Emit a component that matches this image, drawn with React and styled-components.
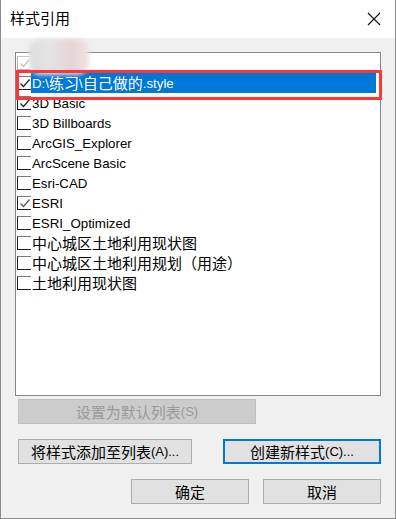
import React from "react";
import styled, { createGlobalStyle } from "styled-components";

const Global = createGlobalStyle`
  html, body { margin: 0; padding: 0; background: #fff; }
  body { font-family: "Liberation Sans", "Noto Sans CJK SC", sans-serif; }
  * { box-sizing: border-box; }
`;

const Window = styled.div`
  width: 396px;
  height: 519px;
  border: 1px solid #8c8c8c;
  border-top: none;
  background: #f0f0f0;
  display: flex;
  flex-direction: column;
  position: relative;
`;

const TitleBar = styled.div`
  height: 38px;
  background: #fff;
  display: flex;
  align-items: center;
  justify-content: space-between;
  padding: 0 0 0 9px;
`;

const Title = styled.div`
  font-family: "Noto Sans CJK SC", sans-serif;
  font-size: 15px;
  color: #000;
  line-height: 20px;
  margin-top: -2px;
`;

const Close = styled.div`
  width: 44px;
  height: 38px;
  display: flex;
  align-items: center;
  justify-content: center;
  margin-right: -1px;
`;

const Body = styled.div`
  flex: 1;
  padding: 14px 14px 0 14px;
  display: flex;
  flex-direction: column;
`;

const ListBox = styled.div`
  height: 344px;
  background: #fff;
  border: 1px solid #828790;
  position: relative;
  padding-right: 4px;
`;

const Row = styled.div`
  height: 20px;
  display: flex;
  align-items: center;
  padding-left: 1px;
`;

const Box = styled.div`
  width: 14px;
  height: 14px;
  border-left: 1px solid ${(p) => (p.$dim ? "#b5b5b5" : "#1e1e1e")};
  border-bottom: 1px solid ${(p) => (p.$dim ? "#b5b5b5" : "#1e1e1e")};
  border-top: 1px solid ${(p) => (p.$dim ? "#c8c8c8" : "#7a7a7a")};
  flex: none;
  display: flex;
  align-items: center;
  justify-content: center;
`;

const Label = styled.div`
  height: 20px;
  flex: 1;
  display: flex;
  align-items: center;
  padding-left: 1px;
  font-size: 13.3px;
  color: ${(p) => (p.$sel ? "#fff" : "#000")};
  background: ${(p) => (p.$sel ? "#0078d7" : "transparent")};
  white-space: nowrap;
`;

const Cjk = styled.span`
  font-family: "Noto Sans CJK SC", sans-serif;
  font-size: 15px;
  line-height: 20px;
`;

const Blur = styled.div`
  position: absolute;
  left: 13px;
  top: -14px;
  width: 60px;
  height: 36px;
  border-radius: 12px;
  background: linear-gradient(90deg, #dedede 0%, #e4e4e4 35%, #e6d4d6 70%, #efe2e3 100%);
  filter: blur(2px);
`;

const Annot = styled.div`
  position: absolute;
  left: 0px;
  top: 17px;
  width: 366px;
  height: 30px;
  border: 3px solid #ff3535;
  pointer-events: none;
`;

const Button = styled.div`
  height: 25px;
  width: ${(p) => p.$w}px;
  border: ${(p) => (p.$focus ? "2px solid #0078d7" : p.$disabled ? "1px solid #bfbfbf" : "1px solid #adadad")};
  background: ${(p) => (p.$disabled ? "#cccccc" : "#e1e1e1")};
  color: ${(p) => (p.$disabled ? "#9a9a9a" : "#000")};
  display: flex;
  align-items: center;
  justify-content: center;
  font-size: 13px;
  white-space: nowrap;
`;

const DefaultRow = styled.div`
  display: flex;
  padding-left: 3px;
  margin-top: 3px;
`;

const MidRow = styled.div`
  display: flex;
  justify-content: space-between;
  padding-left: 3px;
  margin-top: 15px;
`;

const BottomRow = styled.div`
  display: flex;
  justify-content: flex-end;
  gap: 14px;
  margin-top: 15px;
`;

function T({ text }) {
  const parts = text.split(/([\u3000-\u9fff\uff00-\uffef]+)/).filter(Boolean);
  return parts.map((s, i) =>
    /[\u3000-\u9fff\uff00-\uffef]/.test(s) ? <Cjk key={i}>{s}</Cjk> : <span key={i}>{s}</span>
  );
}

const Check = ({ color = "#333" }) => (
  <svg width="12" height="12" viewBox="0 0 12 12">
    <path d="M1.5 6.5 L4.5 9.5 L10.5 2.5" fill="none" stroke={color} strokeWidth="1.2" />
  </svg>
);

const items = [
  { t: "", c: true, dim: true },
  { t: "D:\\练习\\自己做的.style", c: true, sel: true },
  { t: "3D Basic", c: true },
  { t: "3D Billboards" },
  { t: "ArcGIS_Explorer" },
  { t: "ArcScene Basic" },
  { t: "Esri-CAD" },
  { t: "ESRI", c: true, light: true },
  { t: "ESRI_Optimized" },
  { t: "中心城区土地利用现状图" },
  { t: "中心城区土地利用规划（用途）" },
  { t: "土地利用现状图" },
];

export default function App() {
  return (
    <>
      <Global />
      <Window>
        <TitleBar>
          <Title>样式引用</Title>
          <Close>
            <svg width="14" height="14" viewBox="0 0 14 14">
              <path d="M1 1 L13 13 M13 1 L1 13" stroke="#111" strokeWidth="1.1" />
            </svg>
          </Close>
        </TitleBar>
        <Body>
          <ListBox>
            {items.map((it, i) => (
              <Row key={i}>
                <Box $dim={it.dim}>
                  {it.c && <Check color={it.dim ? "#c0c0c0" : it.light ? "#555" : "#222"} />}
                </Box>
                <Label $sel={it.sel}>
                  <T text={it.t} />
                </Label>
              </Row>
            ))}
            <Blur />
            <Annot />
          </ListBox>
          <DefaultRow>
            <Button $w={238} $disabled>
              <T text="设置为默认列表(S)" />
            </Button>
          </DefaultRow>
          <MidRow>
            <Button $w={174}>
              <T text="将样式添加至列表(A)..." />
            </Button>
            <Button $w={158} $focus>
              <T text="创建新样式(C)..." />
            </Button>
          </MidRow>
          <BottomRow>
            <Button $w={118}>
              <T text="确定" />
            </Button>
            <Button $w={118}>
              <T text="取消" />
            </Button>
          </BottomRow>
        </Body>
      </Window>
    </>
  );
}
